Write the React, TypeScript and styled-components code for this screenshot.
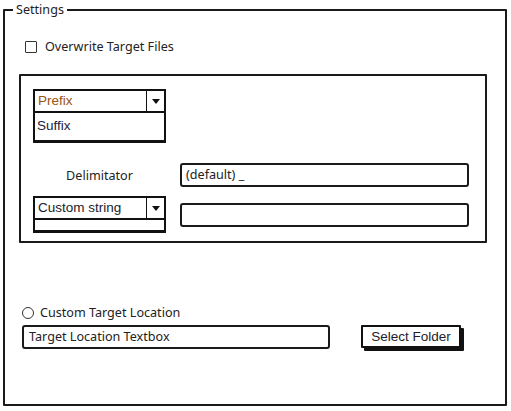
import React from "react";
import styled, { createGlobalStyle } from "styled-components";

const Global = createGlobalStyle`
  html, body { margin: 0; padding: 0; background: #ffffff; }
  body { font-family: "Noto Sans", "Liberation Sans", sans-serif; color: #222; }
  * { box-sizing: border-box; }
`;

const Page = styled.div`
  width: 511px;
  height: 411px;
  padding: 2px 0 0 3px;
  overflow: hidden;
`;

const Frame = styled.fieldset`
  width: 504px;
  margin: 0;
  padding: 0 0 55px 0;
  border: 2px solid #1a1a1a;
  border-radius: 1px;
  display: flex;
  flex-direction: column;
`;

const Legend = styled.legend`
  margin-left: 8px;
  padding: 0 3px;
  font-size: 12.6px;
  line-height: 16px;
  height: 16px;
  color: #222;
`;

const CheckRow = styled.label`
  display: flex;
  align-items: center;
  gap: 8px;
  height: 16px;
  margin: 21px 0 0 20px;
  font-size: 12.6px;
  line-height: 16px;
`;

const CheckBox = styled.span`
  width: 12px;
  height: 12px;
  border: 1.5px solid #333;
  border-radius: 1px;
  background: #fff;
`;

const Panel = styled.div`
  margin: 19px 0 0 14px;
  width: 468px;
  border: 2px solid #1a1a1a;
  border-radius: 1px;
  padding: 13px 0 8px 12px;
  display: flex;
  flex-direction: column;
`;

const Row = styled.div<{ $top?: number }>`
  display: grid;
  grid-template-columns: 133px 289px;
  column-gap: 14px;
  margin-top: ${(p) => p.$top ?? 0}px;
  align-items: start;
`;

const Stack = styled.div`
  display: flex;
  flex-direction: column;
`;

const Combo = styled.div`
  height: 24px;
  border: 2px solid #111;
  display: flex;
  align-items: stretch;
  background: #fff;
`;

const ComboText = styled.span<{ $color?: string }>`
  flex: 1;
  font-family: "Liberation Sans", Arial, sans-serif;
  font-size: 13.5px;
  line-height: 20px;
  padding-left: 3px;
  color: ${(p) => p.$color ?? "#1c1c2a"};
`;

const ArrowBox = styled.span`
  width: 18px;
  border-left: 1px solid #111;
  display: flex;
  align-items: center;
  justify-content: center;
`;

const Arrow = styled.span`
  width: 0;
  height: 0;
  border-left: 4px solid transparent;
  border-right: 4px solid transparent;
  border-top: 5px solid #111;
`;

const ListBox = styled.div<{ $h: number }>`
  height: ${(p) => p.$h}px;
  border: 2px solid #111;
  border-top: none;
  border-bottom-width: 3px;
  font-family: "Liberation Sans", Arial, sans-serif;
  font-size: 13.5px;
  line-height: 26px;
  padding-left: 2px;
  color: #1c1c3a;
`;

const Label = styled.div`
  height: 24px;
  display: flex;
  align-items: center;
  justify-content: center;
  font-size: 12.6px;
`;

const TextBox = styled.div<{ $top?: number; $w?: number; $pad?: number }>`
  height: 24px;
  width: ${(p) => p.$w ?? 289}px;
  margin-top: ${(p) => p.$top ?? 0}px;
  border: 2px solid #1a1a1a;
  border-radius: 3px;
  padding-left: ${(p) => p.$pad ?? 4}px;
  font-size: 12.6px;
  line-height: 20px;
  background: #fff;
`;

const RadioRow = styled.label`
  display: flex;
  align-items: center;
  gap: 6px;
  height: 16px;
  margin: 62px 0 0 17px;
  font-size: 12.6px;
  line-height: 16px;
`;

const Radio = styled.span`
  width: 12px;
  height: 12px;
  border: 1.2px solid #333;
  border-radius: 50%;
`;

const LocationRow = styled.div`
  display: flex;
  align-items: flex-start;
  gap: 31px;
  margin: 4px 0 0 17px;
`;

const Button = styled.button`
  width: 100px;
  height: 23px;
  margin: 0;
  padding: 0;
  border: 2px solid #111;
  border-radius: 1px;
  background: #fff;
  box-shadow: 3px 3px 0 #111;
  font-family: "Liberation Sans", Arial, sans-serif;
  font-size: 13.5px;
  color: #1c1c2a;
`;

export default function App() {
  return (
    <Page>
      <Global />
      <Frame>
        <Legend>Settings</Legend>
        <CheckRow>
          <CheckBox />
          Overwrite Target Files
        </CheckRow>
        <Panel>
          <Row>
            <Stack>
              <Combo>
                <ComboText $color="#9a5410">Prefix</ComboText>
                <ArrowBox>
                  <Arrow />
                </ArrowBox>
              </Combo>
              <ListBox $h={30}>Suffix</ListBox>
            </Stack>
          </Row>
          <Row $top={20}>
            <Label>Delimitator</Label>
            <TextBox>(default) _</TextBox>
          </Row>
          <Row $top={9}>
            <Stack>
              <Combo>
                <ComboText>Custom string</ComboText>
                <ArrowBox>
                  <Arrow />
                </ArrowBox>
              </Combo>
              <ListBox $h={13} />
            </Stack>
            <TextBox $top={7} />
          </Row>
        </Panel>
        <RadioRow>
          <Radio />
          Custom Target Location
        </RadioRow>
        <LocationRow>
          <TextBox $w={308} $pad={5}>Target Location Textbox</TextBox>
          <Button>Select Folder</Button>
        </LocationRow>
      </Frame>
    </Page>
  );
}
